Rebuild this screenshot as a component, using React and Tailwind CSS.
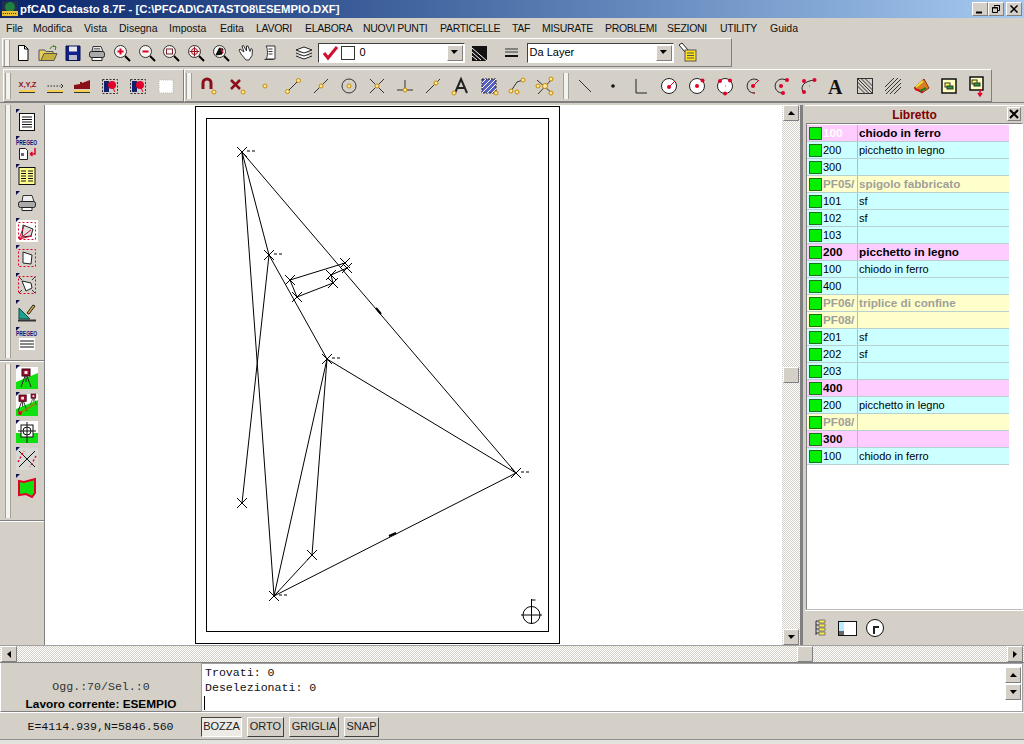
const raised = "border border-t-white border-l-white border-r-[#808080] border-b-[#808080]";
const dither = "bg-[repeating-conic-gradient(#d4d0c8_0_25%,#ffffff_0_50%)] bg-size-[2px_2px]";
const RED = "#e0002a";
const OR = "#c98a00";
const caps = "tracking-[-0.3px]";

const menu = [
  ["File", "w-[27px]"], ["Modifica", "w-[51px]"], ["Vista", "w-[35px]"], ["Disegna", "w-[50px]"],
  ["Imposta", "w-[51px]"], ["Edita", "w-[36px]"], ["LAVORI", `w-[49px] ${caps}`], ["ELABORA", `w-[58px] ${caps}`],
  ["NUOVI PUNTI", `w-[77px] ${caps}`], ["PARTICELLE", `w-[72px] ${caps}`], ["TAF", `w-[30px] ${caps}`], ["MISURATE", `w-[63px] ${caps}`],
  ["PROBLEMI", `w-[62px] ${caps}`], ["SEZIONI", `w-[53px] ${caps}`], ["UTILITY", `w-[50px] ${caps}`], ["Guida", "w-[40px]"],
];

const rows = [
  ["100", "chiodo in ferro", "p", true],
  ["200", "picchetto in legno", "c"],
  ["300", "", "c"],
  ["PF05/", "spigolo fabbricato", "y"],
  ["101", "sf", "c"],
  ["102", "sf", "c"],
  ["103", "", "c"],
  ["200", "picchetto in legno", "p"],
  ["100", "chiodo in ferro", "c"],
  ["400", "", "c"],
  ["PF06/", "triplice di confine", "y"],
  ["PF08/", "", "y"],
  ["201", "sf", "c"],
  ["202", "sf", "c"],
  ["203", "", "c"],
  ["400", "", "p"],
  ["200", "picchetto in legno", "c"],
  ["PF08/", "", "y"],
  ["300", "", "p"],
  ["100", "chiodo in ferro", "c"],
];

function Svg({ children, s = 24 }) {
  return (
    <svg width={s} height={s} viewBox="0 0 24 24" fill="none" stroke="black" strokeWidth="1">
      {children}
    </svg>
  );
}

const Dot = ({ x, y, r = 2 }) => <circle cx={x} cy={y} r={r} fill="#ffe9a0" stroke={OR} />;
const Red = ({ x, y, r = 2 }) => <circle cx={x} cy={y} r={r} fill={RED} stroke="none" />;

function Mag({ children }) {
  return (
    <Svg>
      <circle cx="10.5" cy="10.5" r="6" fill="#f4f4f0" stroke="#333" />
      <path d="M15 15l5 5" strokeWidth="2" />
      {children}
    </Svg>
  );
}

function Ruler() {
  return (
    <>
      <rect x="4" y="16" width="16" height="2" fill="#f5d050" stroke="none" />
      <path d="M4 18.5h16" stroke="#333" />
    </>
  );
}

function Pregeo() {
  return (
    <text transform="translate(1 7.500) scale(0.62 1)" fontSize="8" fontWeight="700" fontFamily="Liberation Sans" fill="#10107a" stroke="none">PREGEO</text>
  );
}

const tb1 = [
  <Svg><path d="M7.500 4.500h6l3.500 3.500v11.500h-9.500z" fill="white" /><path d="M13.500 4.500v3.500h3.500" /></Svg>,
  <Svg><path d="M3 9h6l1 1.500h7v9H3z" fill="#e8d060" stroke="#555" /><path d="M5 19.500l3-7h13l-3 7z" fill="#c8b040" stroke="#555" /><path d="M14 8c1-3 4-3 6-2M20 6l-3-1.500M20 6l-1 3" stroke="#3a7a20" /></Svg>,
  <Svg><path d="M5 5h14v14.500H5z" fill="#10208c" stroke="#08104a" /><rect x="8" y="5.500" width="8" height="5" fill="#e8e8f0" stroke="none" /><rect x="8" y="14" width="8" height="5" fill="#b8b8c8" stroke="none" /></Svg>,
  <Svg><path d="M8 5.500h8l2 5H7z" fill="#eee" stroke="#333" /><rect x="4.500" y="10.500" width="15" height="6" rx="2" fill="#aaa" stroke="#222" /><path d="M7 16.500h10v3H7z" fill="white" stroke="#222" /><path d="M9 7.500h6M8.500 9h7" stroke="#777" /></Svg>,
  <Mag><path d="M7.500 10.500h6M10.500 7.500v6" stroke={RED} strokeWidth="2" /></Mag>,
  <Mag><path d="M7.500 10.500h6" stroke={RED} strokeWidth="2" /></Mag>,
  <Mag><rect x="7.500" y="8" width="6" height="5" stroke="#7a2030" /></Mag>,
  <Mag><path d="M10.500 5.500v10M5.500 10.500h10" stroke="#9a1020" /><circle cx="10.500" cy="10.500" r="3" stroke="#9a1020" /></Mag>,
  <Mag><path d="M7 14l3.500-7 3.500 1-1 5z" fill="#111" /><path d="M12 7l2 5" stroke="#c02030" strokeWidth="1.500" /></Mag>,
  <Svg><path d="M7 13l-2-4 1-1 4 3-2-6 1.500-.5 3 5.500 0-5 1.500 0 2 5.500 1-3 1.500 1-.5 6-3 4.500h-3z" fill="white" stroke="#333" /></Svg>,
  <Svg><path d="M8 5h9v13H8c2-2 2-11 0-13z" fill="white" stroke="#333" /><path d="M10.500 8h4M10.500 10.500h4M10.500 13h4M6.500 18.500h9" stroke="#333" /></Svg>,
];

const tb2a = [
  <Svg><text x="3.500" y="13" fontSize="7.500" fontFamily="Liberation Sans" fill="#901020" stroke="none" fontWeight="700">X,Y,Z</text><Ruler /></Svg>,
  <Svg><path d="M4.500 12h13" stroke="#222" strokeDasharray="1.500 1.500" /><path d="M18 10l2 2-2 2" stroke="#222" /><Ruler /></Svg>,
  <Svg><path d="M4 15v-4l6-1v-2h2v1l8-3v9z" fill="#8a0f18" stroke="none" /><Ruler /></Svg>,
  <Svg><rect x="4.500" y="5.500" width="15" height="14" strokeDasharray="2 1.500" stroke="#333" /><rect x="6" y="7" width="5" height="11" fill="#10206c" stroke="none" /><Red x="14" y="11" r="4" /><path d="M14 12l3 6" stroke={RED} /></Svg>,
  <Svg><rect x="4.500" y="5.500" width="15" height="14" strokeDasharray="2 1.500" stroke="#333" /><rect x="6" y="7" width="5" height="11" fill="#10206c" stroke="none" /><Red x="14" y="11" r="4" /><path d="M14 12l3 6" stroke={RED} /></Svg>,
  <Svg><rect x="5" y="6" width="14" height="13" fill="white" stroke="#bbb" strokeDasharray="1 1" /></Svg>,
];

const tb2b = [
  <Svg><path d="M6 15V9a4 4 0 0 1 8 0v6" stroke="#8a0f18" strokeWidth="3" /><Dot x="17" y="18" /></Svg>,
  <Svg><path d="M6 6l9 9M15 6l-9 9" stroke="#8a0f18" strokeWidth="2.500" /><Dot x="18" y="18" /></Svg>,
  <Svg><Dot x="12" y="12" /></Svg>,
  <Svg><path d="M6 18L18 6" stroke="#333" /><Dot x="6.500" y="17.500" /><Dot x="17.500" y="6.500" /></Svg>,
  <Svg><path d="M5 19L19 5" stroke="#333" /><Dot x="12" y="12" /></Svg>,
  <Svg><circle cx="12" cy="12" r="7" stroke="#333" /><Dot x="12" y="12" /></Svg>,
  <Svg><path d="M5 5l14 14M19 5L5 19" stroke="#333" /><Dot x="12" y="12" /></Svg>,
  <Svg><path d="M12 6v10M4 16h16" stroke="#333" /><Dot x="12" y="16" /></Svg>,
  <Svg><path d="M5 19L19 5" stroke="#333" /><Dot x="15" y="9" /></Svg>,
  <Svg><path d="M6 19l6-14 6 14M8 14h8" stroke="#222" strokeWidth="2" /><Dot x="5" y="19" /></Svg>,
  <Svg><rect x="5" y="5" width="14" height="14" fill="#5a60c0" stroke="#222" strokeDasharray="2 1" /><path d="M5 9l4-4M5 14l9-9M5 19L19 5M10 19l9-9M15 19l4-4" stroke="white" /><Dot x="19" y="19" /></Svg>,
  <Svg><path d="M6 17L12 8l6-2" stroke="#333" /><Dot x="6" y="17" /><Dot x="18" y="6" /><Dot x="12" y="18" /></Svg>,
  <Svg><path d="M4 6l16 14M20 4L5 20" stroke="#333" /><Dot x="12" y="12" r="2.500" /><Dot x="5" y="12" /><Dot x="18" y="5" /><Dot x="18" y="19" /></Svg>,
];

const CircleIco = ({ children }) => (
  <Svg><circle cx="12" cy="12" r="7.500" fill="white" stroke="#222" />{children}</Svg>
);

const tb2c = [
  <Svg><path d="M6 6l12 12" stroke="#333" /></Svg>,
  <Svg><circle cx="12" cy="12" r="1.800" fill="#111" stroke="none" /></Svg>,
  <Svg><path d="M7 5v14h11" stroke="#222" /></Svg>,
  <CircleIco><Red x="12" y="13" /><path d="M12 13l6-6" stroke={RED} /></CircleIco>,
  <CircleIco><Red x="12" y="12" /><Red x="17.500" y="6.500" /></CircleIco>,
  <CircleIco><Red x="7" y="7" /><Red x="17" y="6.500" /><Red x="12" y="19.500" /><path d="M12 12h.5" /></CircleIco>,
  <Svg><path d="M18 7a7 7 0 1 0-4 12" stroke="#222" /><Red x="12" y="12" /><path d="M12 12l6-6" stroke={RED} /><path d="M13 20v-2" stroke={RED} /></Svg>,
  <Svg><path d="M18 7a7 7 0 1 0-4 12" stroke="#222" /><Red x="12" y="12" /><Red x="18" y="6" /><Red x="14" y="19" /></Svg>,
  <Svg><path d="M6 18c-3-6 1-11 12-12" stroke="#222" /><Red x="7" y="7" /><Red x="17.500" y="6" /><Red x="7" y="18" /><path d="M12 12h.5" /></Svg>,
  <Svg><text x="3" y="20" fontSize="20" fontWeight="700" fontFamily="Liberation Serif" fill="#111" stroke="none">A</text></Svg>,
  <Svg><rect x="4.500" y="4.500" width="15" height="15" stroke="#333" /><path d="M4.500 8l11.500 11.500M4.500 12l7.500 7.500M8 4.500L19.500 16M12 4.500l7.500 7.500M4.500 4.500l15 15" stroke="#333" /></Svg>,
  <Svg><path d="M4 13l9-9M4 17L17 4M5 20L20 5M9 20L20 9M13 20l7-7" stroke="#333" /></Svg>,
  <Svg><path d="M5 14l10-9 5 9-7 5z" fill="#d88020" stroke="#8a3010" /><path d="M6 15l8 3" stroke={RED} strokeWidth="2" /><path d="M7 13l7-6" stroke="#f0e040" strokeWidth="2" /><path d="M11 17l6-3" stroke="#208020" strokeWidth="2" /></Svg>,
  <Svg><rect x="5" y="5" width="14" height="14" fill="#ffffc0" stroke="#111" strokeWidth="1.500" /><rect x="8" y="9" width="5" height="4" fill="#ffff60" stroke="#333" /><rect x="10" y="12" width="6" height="3" fill="#20a040" stroke="#333" /></Svg>,
  <Svg><rect x="5" y="3" width="13" height="13" fill="#ffffc0" stroke="#111" strokeWidth="1.500" /><rect x="7" y="6" width="5" height="4" fill="#ffff60" stroke="#333" /><rect x="9" y="9" width="6" height="3" fill="#20a040" stroke="#333" /><path d="M15 15v6M13 19l2 3 2-3" stroke={RED} strokeWidth="1.500" /></Svg>,
];

function Flag() {
  return <span className="absolute left-[4px] top-[1px] w-0 h-0 border-t-[4px] border-r-[4px] border-t-[#101050] border-r-transparent" />;
}

const Grass = () => (
  <>
    <rect x="1" y="1" width="22" height="22" fill="white" stroke="none" />
    <path d="M1 23V16L23 7v16z" fill="#10e010" stroke="none" />
  </>
);
const Tripod = ({ x = 9, y = 4, k = 1 }) => (
  <g transform={`translate(${x} ${y}) scale(${k})`}>
    <rect x="0" y="0" width="8" height="7" fill="#9a1030" stroke="#40000c" />
    <rect x="2.500" y="2" width="3" height="3" fill="#eee" stroke="none" />
    <path d="M4 7v6M3 7l-4 11M5 7l4 11" stroke="#222" />
  </g>
);

const left1 = [
  <Svg><rect x="4.500" y="3.500" width="15" height="17" fill="white" stroke="#111" /><path d="M7 7h10M7 9.500h10M7 12h10M7 14.500h10M7 17h10" stroke="#111" /></Svg>,
  <Svg><Pregeo /><path d="M4.500 11.500h6l2 2v9h-8z" fill="white" stroke="#222" /><rect x="6" y="16" width="3" height="3" fill="#667" stroke="none" /><path d="M20 11v6h-5M15 17l2.500-2M15 17l2.500 2" stroke={RED} strokeWidth="1.500" /></Svg>,
  <Svg><rect x="4" y="3.500" width="16" height="17" fill="#ffff90" stroke="#111" /><path d="M6 7h5M6 9.500h5M6 12h5M6 14.500h5M6 17h5M13 7h5M13 9.500h5M13 12h5M13 14.500h5M13 17h5" stroke="#111" /></Svg>,
  <Svg><path d="M8 4.500h9l2 6H7z" fill="#eee" stroke="#333" /><rect x="3.500" y="10.500" width="17" height="6" rx="2" fill="#aaa" stroke="#222" /><path d="M7 16.500h10v3H7z" fill="white" stroke="#222" /></Svg>,
  <Svg><rect x="1" y="1" width="22" height="22" fill="white" stroke="none" /><rect x="3.500" y="3.500" width="17" height="17" stroke={RED} strokeDasharray="2 2" /><path d="M8 6l10 4-2 7-9 1z" fill="#e0e0e0" stroke="#222" /><path d="M4 20L9 7M4 20l12-9M4 20l13-3" stroke={RED} /></Svg>,
  <Svg><rect x="3.500" y="3.500" width="17" height="17" stroke={RED} strokeDasharray="2 2" /><path d="M8 6l9 3-1 9-8-1z" fill="white" stroke="#222" /></Svg>,
  <Svg><rect x="3.500" y="3.500" width="17" height="17" stroke={RED} strokeDasharray="2 2" /><path d="M7 8l9 2 1 5-6 3z" fill="white" stroke="#222" /><path d="M4 4l3 3M20 4l-3 3M4 20l3-3M20 20l-3-3" stroke="#333" /></Svg>,
  <Svg><path d="M4 19V8l11 11z" fill="#20a090" stroke="#0a4a40" /><path d="M12 13l6-8 2 1-6 8z" fill="#d8b040" stroke="#222" /><path d="M3 20.500h18" stroke="#333" strokeWidth="2" /></Svg>,
  <Svg><Pregeo /><rect x="4" y="10" width="16" height="12" fill="white" stroke="none" /><path d="M5 13h14M5 16h14M5 19h14" stroke="#111" /></Svg>,
];

const left2 = [
  <Svg><Grass /><Tripod x={7} y={3} /></Svg>,
  <Svg><Grass /><Tripod x={4} y={2} k={0.9} /><Tripod x={16} y={1} k={0.6} /><path d="M5 20L20 11" stroke="#a08000" strokeWidth="1.500" /><Red x="5" y="20" /></Svg>,
  <Svg><rect x="1" y="1" width="22" height="12" fill="white" stroke="none" /><rect x="1" y="13" width="22" height="10" fill="#10e010" stroke="none" /><rect x="6" y="5" width="12" height="12" fill="white" stroke="#111" /><circle cx="12" cy="11" r="4" stroke="#111" /><path d="M12 2v21M3 11h18" stroke="#111" /></Svg>,
  <Svg><rect x="1" y="1" width="22" height="22" fill="#d8d8d4" stroke="none" /><path d="M4 4l16 16M20 4L4 20" stroke="#111" /><path d="M3 15l6-11M21 9l-6 11" stroke={RED} strokeDasharray="2 2" strokeWidth="1.500" /></Svg>,
  <Svg><path d="M4 6l5 1 11-3v14l-3 4-6-3-7 1z" fill="#10e010" stroke={RED} strokeWidth="2" /></Svg>,
];

function Toolbar({ children, className = "" }) {
  return <div className={`flex items-center h-full ${raised} ${className}`}>{children}</div>;
}

function Gripper({ className = "h-[26px]" }) {
  return <div className={`mx-[1px] w-[6px] border-x border-x-[#a0a098] bg-[#f4f3ef] shrink-0 ${className}`} />;
}

function Tool({ icon, w = "w-[24.700px]" }) {
  return <div className={`${w} h-[24px] flex items-center justify-center shrink-0`}>{icon}</div>;
}

function Arrow({ dir }) {
  const d = { up: "M4 2l-3 4h7z", down: "M1 2h7L4 6z", left: "M6 1v7L2 4z", right: "M2 1v7l4-4z" }[dir];
  return (
    <svg width="9" height="9" viewBox="0 0 9 9"><path d={d} fill="black" /></svg>
  );
}

function ScrollBtn({ dir, className = "" }) {
  return (
    <div className={`w-[16px] h-[16px] bg-[#d4d0c8] flex items-center justify-center shrink-0 ${raised} ${className}`}>
      <Arrow dir={dir} />
    </div>
  );
}

function Combo({ children, className }) {
  return (
    <div className={`h-[20px] flex items-center bg-white border border-t-[#404040] border-l-[#404040] border-r-white border-b-white shrink-0 ${className}`}>
      <div className="flex-1 flex items-center min-w-0 text-[11px] text-black">{children}</div>
      <div className={`w-[16px] h-[16px] mr-[1px] bg-[#d4d0c8] flex items-center justify-center ${raised}`}>
        <Arrow dir="down" />
      </div>
    </div>
  );
}

const P = [[242, 152], [269, 255], [327, 359], [516, 473], [274, 596], [312, 555], [242, 503], [290, 280], [297, 297], [345, 263], [347, 268], [331, 275], [333, 283]];
const segs = [[0, 4], [0, 1], [1, 6], [1, 2], [0, 3], [2, 3], [2, 4], [2, 5], [5, 4], [3, 4], [7, 9], [7, 8], [8, 12], [12, 11], [11, 10]];
const labelled = [0, 1, 2, 3, 4];

function Drawing() {
  return (
    <svg className="block" width="737" height="541" viewBox="45 105 737 541" fill="none" stroke="black" strokeWidth="1">
      <rect x="195.500" y="106.500" width="364" height="537" />
      <rect x="206.500" y="118.500" width="342" height="513" />
      {segs.map(([a, b], i) => (
        <line key={i} x1={P[a][0]} y1={P[a][1]} x2={P[b][0]} y2={P[b][1]} />
      ))}
      {P.map(([x, y], i) => (
        <path key={i} d={`M${x - 5} ${y - 5}l10 10M${x + 5} ${y - 5}l-10 10`} />
      ))}
      {labelled.map((i) => (
        <path key={i} d={`M${P[i][0] + 5} ${P[i][1] - 1}h10`} strokeDasharray="3 2" />
      ))}
      <path d="M376 308l5 6M389 536l7-3" strokeWidth="2" />
      <circle cx="531.500" cy="615" r="8.500" />
      <path d="M531.500 599v25M521 615h21M531.500 600h4" />
    </svg>
  );
}

const rowBg = { p: "bg-[#ffccff]", c: "bg-[#ccffff]", y: "bg-[#ffffcc]" };

function LibRow({ row }) {
  const [id, text, kind, white] = row;
  let tone = "text-black font-normal text-[11px]";
  if (kind === "p") tone = "text-black font-bold text-[11.700px]";
  if (kind === "y") tone = "text-[#a0a098] font-bold text-[11.700px]";
  return (
    <div className={`h-[17px] flex items-center border-b border-b-[#b8d0d0] ${rowBg[kind]}`}>
      <div className="w-[13px] ml-[2px] mr-[1px] h-[13px] bg-[#00f000] border border-[#207020] shrink-0" />
      <div className={`w-[34px] h-full leading-[16px] overflow-hidden whitespace-nowrap shrink-0 ${tone} ${white ? "text-white" : ""}`}>{id}</div>
      <div className={`pl-[1px] h-full leading-[16px] border-l border-l-[#a8c0c0] whitespace-nowrap ${tone}`}>{text}</div>
    </div>
  );
}

function StatusBtn({ label, w, on }) {
  const look = on
    ? "border-t-[#404040] border-l-[#404040] border-r-white border-b-white bg-[#ecebe6]"
    : "border-t-white border-l-white border-r-[#404040] border-b-[#404040]";
  return (
    <div className={`h-[20px] ${w} border flex items-center justify-center text-[11px] text-[#222] ${look}`}>{label}</div>
  );
}

export default function App() {
  return (
    <div className="w-[1024px] h-[744px] overflow-hidden flex flex-col bg-[#d4d0c8] font-['Liberation_Sans',Arial,sans-serif] text-black">
      {/* Title bar */}
      <div className="h-[18px] flex items-center bg-linear-to-r from-[#0a246a] to-[#a6caf0] shrink-0">
        <div className="w-[20px] h-[18px] pl-[2px] pt-[1px] shrink-0">
          <svg width="16" height="16" viewBox="0 0 16 16">
            <rect width="16" height="16" fill="#203050" />
            <circle cx="8" cy="6" r="5" fill="#208040" />
            <rect x="0" y="10" width="16" height="5" fill="#e8c030" />
            <path d="M1 12.500h14" stroke="#503000" strokeDasharray="1 1" />
          </svg>
        </div>
        <span className="text-white font-bold text-[11.300px] whitespace-nowrap">pfCAD Catasto 8.7F - [C:\PFCAD\CATASTO8\ESEMPIO.DXF]</span>
        <div className="ml-auto flex mr-[2px]">
          {["min", "max", "close"].map((k) => (
            <div key={k} className={`w-[16px] h-[14px] bg-[#d4d0c8] flex items-center justify-center ${k === "close" ? "ml-[2px]" : ""} ${raised}`}>
              <svg width="10" height="10" viewBox="0 0 10 10" stroke="black" fill="none">
                {k === "min" && <path d="M1 8.500h6" strokeWidth="2" />}
                {k === "max" && <path d="M3.500 2.500v-1h5v5h-2M1.500 3.500h5v5h-5zM1.500 4h5M3.500 1.500h5" />}
                {k === "close" && <path d="M1.500 1.500l7 7M8.500 1.500l-7 7" strokeWidth="1.500" />}
              </svg>
            </div>
          ))}
        </div>
      </div>

      {/* Menu */}
      <div className="h-[20px] pt-[1px] flex items-center pl-[6px] text-[10.500px] text-[#111] shrink-0">
        {menu.map(([m, w]) => (
          <span key={m} className={`${w} whitespace-nowrap shrink-0`}>{m}</span>
        ))}
      </div>

      {/* Top toolbar */}
      <div className="h-[29px] pl-[2px] shrink-0 mb-[2px] w-[732px]">
        <Toolbar>
          <Gripper />
          {tb1.map((ic, i) => <Tool key={i} icon={ic} />)}
          <div className="w-[9px] shrink-0" />
          <Tool icon={<Svg><path d="M4 9l8-3 8 3-8 3zM4 12l8 3 8-3M4 15l8 3 8-3" stroke="#222" fill="white" /></Svg>} w="w-[25px]" />
          <Combo className="w-[147px] ml-[1px]">
            <svg width="19" height="18" viewBox="0 0 19 18" className="ml-[2px]"><path d="M3 9l4 5 9-11" stroke="#d01030" strokeWidth="3" fill="none" /></svg>
            <span className="ml-[1px] w-[14px] h-[14px] border border-[#333] bg-white" />
            <span className="ml-[5px]">0</span>
          </Combo>
          <Tool icon={<Svg><rect x="5" y="5" width="15" height="15" fill="#111" stroke="none" /><path d="M5 7l15 13M5 11l9 8M5 15l5 4" stroke="white" /></Svg>} w="w-[28px]" />
          <div className="w-[7px] shrink-0" />
          <Tool icon={<Svg><path d="M5 8h13M5 11h13" stroke="#333" /><path d="M5 15h13" stroke="#111" strokeWidth="2" /></Svg>} w="w-[24px]" />
          <Combo className="w-[147px] ml-[3px]"><span className="ml-[2px]">Da Layer</span></Combo>
          <Tool icon={<Svg><path d="M3 4l3-2 6 7-3 2z" fill="white" stroke="#222" /><rect x="9" y="9" width="11" height="11" fill="#ffe020" stroke="#555" /><path d="M11 12h7M11 14.500h7M11 17h7" stroke="#555" /></Svg>} w="w-[28px]" />
        </Toolbar>
      </div>

      {/* Second toolbar */}
      <div className="h-[33px] flex shrink-0 w-[992px]">
        <Toolbar className="w-[182px] ml-[3px]">
          <Gripper />
          <div className="w-[1px] shrink-0" />
          {tb2a.map((ic, i) => <Tool key={i} icon={ic} w="w-[27.800px]" />)}
        </Toolbar>
        <Toolbar className="flex-1">
          <Gripper />
          <div className="w-[2px] shrink-0" />
          {tb2b.map((ic, i) => <Tool key={i} icon={ic} w="w-[28px]" />)}
          <div className="w-[3px] shrink-0" />
          <Gripper />
          <div className="w-[1px] shrink-0" />
          {tb2c.map((ic, i) => <Tool key={i} icon={ic} w="w-[28px]" />)}
        </Toolbar>
      </div>

      {/* Main area */}
      <div className="h-[543px] pt-[2px] flex shrink-0 border-t border-t-[#808080]">
        <div className="w-[45px] shrink-0 flex flex-col border-r border-r-[#808080]">
          <div className="h-[256px] flex pl-[4px] border-b border-b-[#808080]">
            <Gripper className="self-stretch mb-[2px]" />
            <div className="pt-[3px]">
              {left1.map((ic, i) => (
                <div key={i} className="relative w-[30px] h-[27.250px] flex items-center justify-center">
                  <Flag />
                  {ic}
                </div>
              ))}
            </div>
          </div>
          <div className="h-[160px] flex pl-[4px] border-t border-t-white border-b border-b-[#808080]">
            <Gripper className="self-stretch my-[2px]" />
            <div className="pt-[2px]">
              {left2.map((ic, i) => (
                <div key={i} className="relative w-[30px] h-[27.250px] flex items-center justify-center">
                  <Flag />
                  {ic}
                </div>
              ))}
            </div>
          </div>
          <div className="flex-1 border-t border-t-white" />
        </div>

        <div className="w-[737px] bg-white shrink-0 overflow-hidden">
          <Drawing />
        </div>

        <div className={`w-[18px] flex flex-col justify-between items-center shrink-0 ${dither}`}>
          <ScrollBtn dir="up" />
          <div className={`w-[16px] h-[16px] bg-[#d4d0c8] ${raised}`} />
          <ScrollBtn dir="down" />
        </div>

        <div className="w-[3px] bg-[#808080] shrink-0" />
        <div className="w-[2px] shrink-0" />

        <div className="w-[219px] shrink-0 flex flex-col">
          <div className="h-[18px] flex items-center justify-center relative text-[12px] font-bold text-[#800000] border-t border-t-white">
            Libretto
            <div className={`absolute right-[3px] top-[1px] w-[14px] h-[14px] flex items-center justify-center ${raised}`}>
              <svg width="10" height="10" viewBox="0 0 10 10"><path d="M1 1l8 8M9 1l-8 8" stroke="black" strokeWidth="2" /></svg>
            </div>
          </div>
          <div className="h-[487px] mr-[1px] ml-[1px] bg-white border border-t-[#808080] border-l-[#808080] border-b-[#bbb] border-r-white pt-[1px]">
            <div className="w-[202px]">
              {rows.map((r, i) => <LibRow key={i} row={r} />)}
            </div>
          </div>
          <div className="flex-1 flex items-center gap-[3px] pl-[4px] border-t border-t-white">
            <Tool w="w-[24px]" icon={<Svg><path d="M7 5h3M7 5v14M7 9h3M7 13h3M7 17h3" stroke="#333" /><path d="M10 4h6v3h-6zM10 8h6v3h-6zM10 12h6v3h-6zM10 16h6v3h-6z" fill="#ffee40" stroke="#777" /></Svg>} />
            <Tool w="w-[24px]" icon={<Svg><rect x="2.500" y="5.500" width="18" height="14" fill="white" stroke="#111" /><rect x="3" y="6" width="5" height="9" fill="#b8ecff" stroke="none" /><rect x="3" y="15" width="5" height="4" fill="#666" stroke="none" /></Svg>} />
            <Tool w="w-[24px]" icon={<Svg><circle cx="12" cy="12" r="8.500" fill="white" stroke="#111" /><path d="M11 18v-7h5" strokeWidth="2" stroke="#222" /></Svg>} />
          </div>
        </div>
      </div>

      {/* Horizontal scrollbar */}
      <div className={`h-[17px] pl-[1px] pr-[1px] flex items-center shrink-0 border-t border-t-[#a0a0a0] ${dither}`}>
        <ScrollBtn dir="left" />
        <div className="w-[780px]" />
        <div className={`w-[16px] h-[16px] bg-[#d4d0c8] ${raised}`} />
        <div className="flex-1" />
        <ScrollBtn dir="right" />
      </div>

      {/* Command area */}
      <div className="h-[50px] flex shrink-0 border-t border-t-[#808080] font-['Liberation_Mono',monospace] text-[11.600px]">
        <div className="w-[201px] flex flex-col items-center justify-end border-b border-b-[#808080] border-l border-l-white shrink-0">
          <span className="leading-[16px] mb-[2px] text-[#333]">Ogg.:70/Sel.:0</span>
          <span className="leading-[14px] font-bold font-['Liberation_Sans',sans-serif] text-[11.800px] whitespace-nowrap">Lavoro corrente: ESEMPIO</span>
        </div>
        <div className="flex-1 mr-[1px] flex bg-white border border-[#a0a0a0] pl-[3px] pt-[1px] leading-[15px]">
          <div className="flex-1 text-[#111]">
            <div>Trovati: 0</div>
            <div>Deselezionati: 0</div>
            <div className="w-[1px] h-[14px] bg-black mt-[1px] -ml-[1px]" />
          </div>
          <div className="flex flex-col gap-[1px] mr-[1px] mt-[2px]">
            <ScrollBtn dir="up" className="h-[15px]" />
            <ScrollBtn dir="down" className="h-[15px]" />
          </div>
        </div>
      </div>

      {/* Bottom status */}
      <div className="h-[28px] pt-[1px] flex items-center shrink-0 border-t border-t-white border-b border-b-[#909090]">
        <div className="w-[201px] text-center font-['Liberation_Mono',monospace] text-[11.600px] text-[#111] shrink-0">E=4114.939,N=5846.560</div>
        <div className="flex gap-[5px]">
          <StatusBtn label="BOZZA" w="w-[41px]" on />
          <StatusBtn label="ORTO" w="w-[37px]" />
          <StatusBtn label="GRIGLIA" w="w-[50px]" />
          <StatusBtn label="SNAP" w="w-[35px]" />
        </div>
      </div>
      <div className="flex-1 bg-[#e4e2dc]" />
    </div>
  );
}
